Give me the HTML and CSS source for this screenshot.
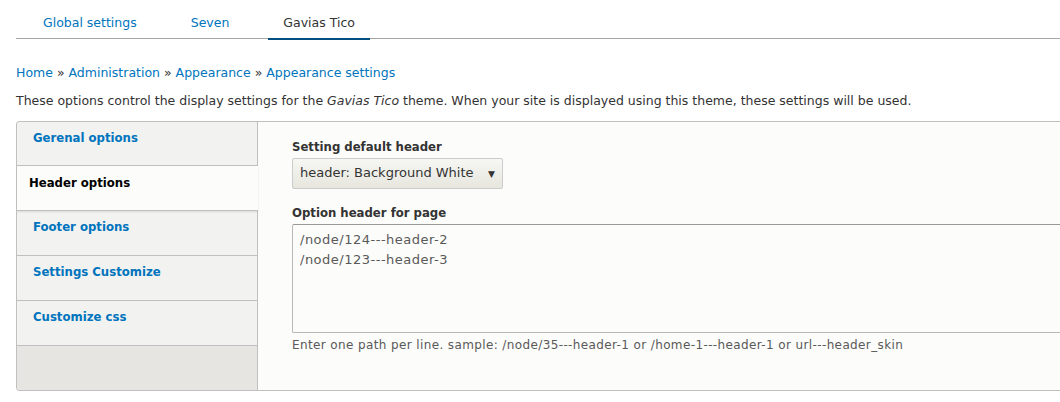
FILE: index.html
```html
<!DOCTYPE html>
<html>
<head>
<meta charset="utf-8">
<link rel="stylesheet" href="styles.css">
</head>
<body>
<div class="page">
  <nav class="tabs">
    <a class="tab" href="#">Global settings</a>
    <a class="tab" href="#">Seven</a>
    <a class="tab active" href="#">Gavias Tico</a>
  </nav>
  <div class="breadcrumb">
    <a href="#">Home</a> » <a href="#">Administration</a> » <a href="#">Appearance</a> » <a href="#">Appearance settings</a>
  </div>
  <p class="intro">These options control the display settings for the <em>Gavias Tico</em> theme. When your site is displayed using this theme, these settings will be used.</p>
  <div class="vtabs">
    <ul class="vmenu">
      <li class="vitem"><a href="#">Gerenal options</a></li>
      <li class="vitem selected"><a href="#">Header options</a></li>
      <li class="vitem"><a href="#">Footer options</a></li>
      <li class="vitem"><a href="#">Settings Customize</a></li>
      <li class="vitem"><a href="#">Customize css</a></li>
    </ul>
    <div class="pane">
      <div class="field">
        <label class="label">Setting default header</label>
        <div class="select">header: Background White <span class="arrow">▼</span></div>
      </div>
      <div class="field">
        <label class="label">Option header for page</label>
        <div class="textarea">/node/124---header-2<br>/node/123---header-3</div>
        <div class="desc">Enter one path per line. sample: /node/35---header-1 or /home-1---header-1 or url---header_skin</div>
      </div>
    </div>
  </div>
</div>
</body>
</html>
```
FILE: styles.css
```css
html, body {
  margin: 0;
  padding: 0;
  background: #fff;
  overflow: hidden;
}
body {
  font-family: "DejaVu Sans", sans-serif;
  font-size: 12.5px;
  color: #333;
}
a { text-decoration: none; color: #0074bd; }
.page {
  width: 1044px;
  padding-left: 16px;
}
.tabs {
  display: flex;
  border-bottom: 1px solid #a6a6a6;
  height: 39px;
  box-sizing: border-box;
}
.tab {
  display: block;
  margin: 0 12px;
  padding: 15px 15px 0;
  color: #0074bd;
  box-sizing: border-box;
  height: 39px;
}
.tab.active {
  color: #333;
  border-bottom: 2px solid #004f80;
  margin-bottom: -1px;
  height: 40px;
}
.breadcrumb {
  margin-top: 26px;
  line-height: 16px;
  color: #333;
}
.intro {
  margin: 12px 0 0;
  line-height: 16px;
}
.vtabs {
  margin-top: 12px;
  display: flex;
  border: 1px solid #c0c0c0;
  border-right: none;
  border-radius: 4px 0 0 4px;
  height: 268px;
  overflow: hidden;
}
.vmenu {
  list-style: none;
  margin: 0;
  padding: 0;
  width: 240px;
  background: #e6e5e1;
  border-right: 1px solid #c0c0c0;
  flex: none;
}
.vitem {
  background: #f2f2f0;
  border-bottom: 1px solid #bfbfbf;
  height: 44px;
}
.vitem:first-child { height: 43px; }
.vitem a {
  display: block;
  font-family: "DejaVu Sans Condensed", "DejaVu Sans", sans-serif;
  font-size: 13px;
  font-weight: bold;
  padding: 8px 16px 0;
  color: #0074bd;
}
.vitem.selected {
  background: #fcfcfa;
  margin-right: -1px;
  box-shadow: 0 1px 2px rgba(0,0,0,0.1);
  position: relative;
}
.vitem.selected a { color: #000; padding-left: 12px; padding-top: 9px; }
.pane {
  flex: 1;
  min-width: 0;
  background: #fcfcfa;
  padding: 17px 0 0 34px;
}
.field { margin-bottom: 16px; }
.label {
  display: block;
  font-family: "DejaVu Sans Condensed", "DejaVu Sans", sans-serif;
  font-size: 13px;
  font-weight: bold;
  margin-bottom: 4px;
  color: #333;
}
.select {
  display: inline-block;
  box-sizing: border-box;
  height: 31px;
  width: 211px;
  border: 1px solid #ccc;
  border-radius: 2px;
  background: linear-gradient(#f6f6f3, #e7e7df);
  padding: 6px 0 0 7px;
  color: #333;
  font-size: 13px;
  position: relative;
}
.arrow {
  position: absolute;
  right: 7px;
  top: 10px;
  font-size: 9px;
  color: #333;
}
.textarea {
  height: 109px;
  box-sizing: border-box;
  border: 1px solid #b8b8b8;
  border-right: none;
  border-top-color: #999;
  border-radius: 2px 0 0 2px;
  padding: 5px 7px;
  line-height: 20px;
  font-size: 13px;
  letter-spacing: 0.5px;
  color: #595959;
}
.desc {
  font-size: 12px;
  letter-spacing: 0.38px;
  color: #595959;
  margin-top: 5px;
}
```
